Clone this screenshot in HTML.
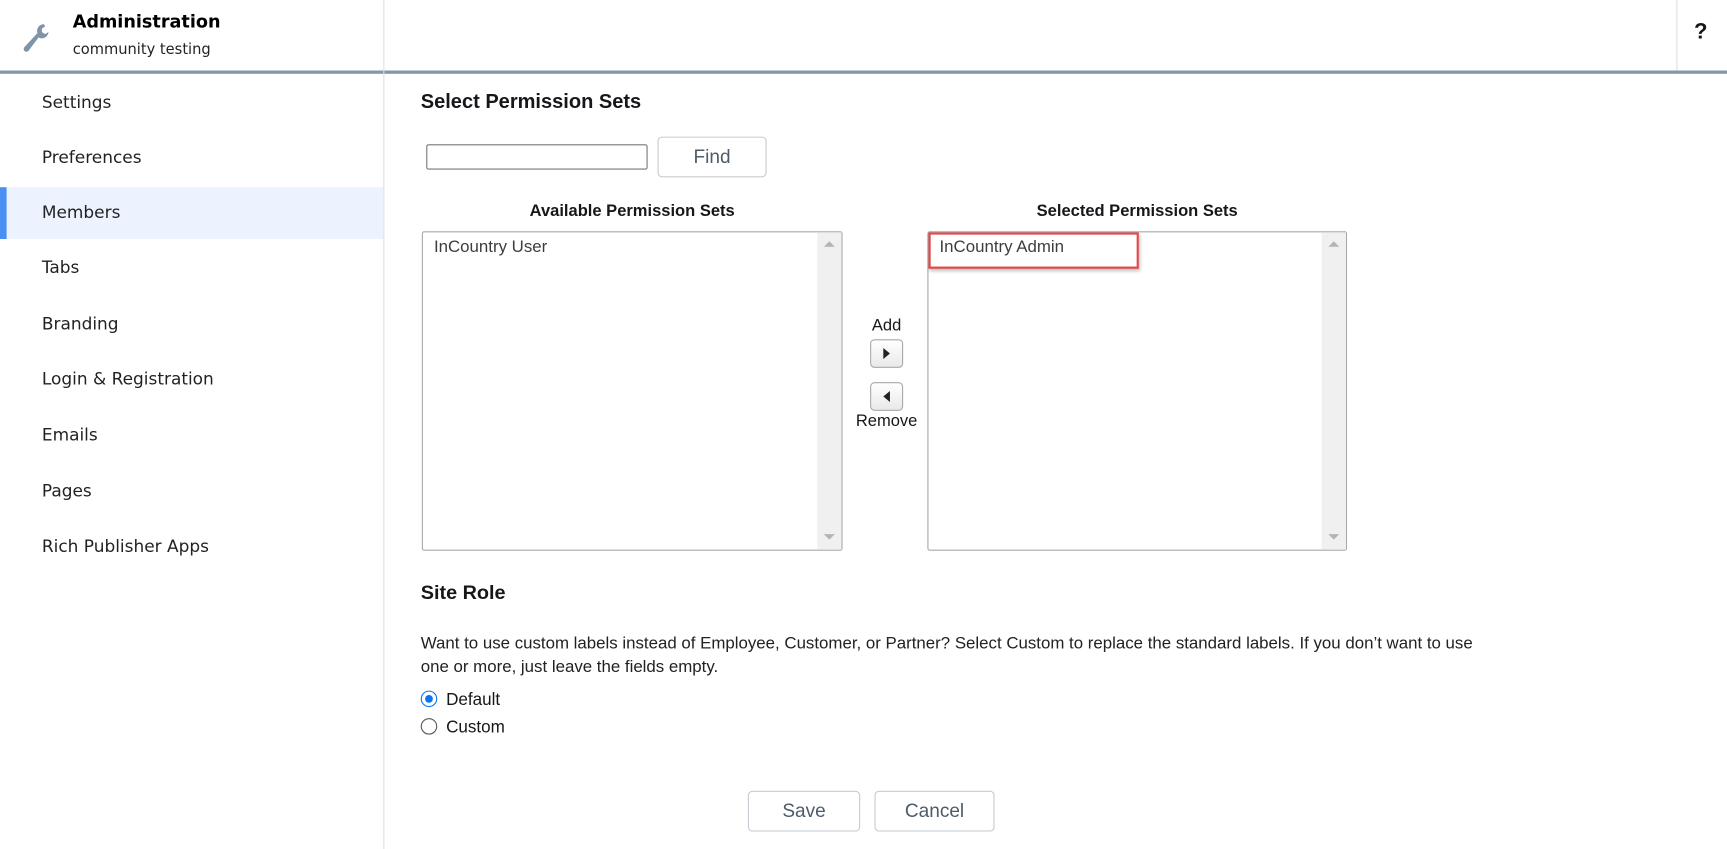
<!DOCTYPE html>
<html><head><meta charset="utf-8"><style>
html,body{margin:0;padding:0;width:1727px;height:849px;overflow:hidden;background:#fff}
#w{position:absolute;left:0;top:0;width:1568px;height:771px;transform:scale(1.1014);transform-origin:0 0;font-family:"Liberation Sans",Arial,sans-serif;color:#16171a}
.a{position:absolute;white-space:nowrap}
.nav{position:absolute;left:38px;color:#1f2124;font-family:"DejaVu Sans","Liberation Sans",sans-serif;font-size:15.4px}
.btn{position:absolute;border:1px solid #c6cbd1;border-radius:4px;background:#fff;color:#4d5b6a;font-size:17.3px;text-align:center;box-sizing:border-box}
.lb{position:absolute;border:1px solid #a8a8a8;border-radius:2px;box-sizing:border-box;background:#fff}
.sb{position:absolute;right:0;top:0;bottom:0;width:22px;background:#f0f0f0}
.up{position:absolute;left:6px;top:8px;width:0;height:0;border-left:5px solid transparent;border-right:5px solid transparent;border-bottom:5px solid #b4b4b4}
.dn{position:absolute;left:6px;bottom:9px;width:0;height:0;border-left:5px solid transparent;border-right:5px solid transparent;border-top:5px solid #b4b4b4}
.it{position:absolute;left:10px;top:5px;font-size:15.3px;color:#3d3d3d}
.ab{position:absolute;left:790px;width:30px;height:26px;border:1px solid #a8a8a8;border-radius:4px;box-sizing:border-box;background:linear-gradient(#fff,#e9e9e9)}
.rd{position:absolute;left:382px;width:15px;height:15px;border-radius:50%;box-sizing:border-box}
</style></head><body><div id="w">
<div class="a" style="left:0;top:64px;width:1568px;height:3px;background:#8497a8"></div>
<div class="a" style="left:348px;top:0;width:1px;height:771px;background:#dcdfe3"></div>
<div class="a" style="left:1522px;top:0;width:1px;height:64px;background:#dcdfe3"></div>
<div class="a" style="left:1538px;top:18px;font-size:20px;font-weight:bold">?</div>
<svg class="a" style="left:18px;top:18px" width="30" height="32" viewBox="0 0 30 32"><path d="M22 4 a6 6 0 0 0 -6 8 L4 25 a2.5 2.5 0 0 0 4 3 L17 16 a6 6 0 0 0 9 -5 l-3 2 l-3 -2 l0 -3 l3 -2 z" fill="#7e94a8"/></svg>
<div class="a" style="left:66px;top:10px;font-size:16px;font-weight:bold;font-family:'DejaVu Sans','Liberation Sans',sans-serif;color:#000">Administration</div>
<div class="a" style="left:66px;top:38px;font-size:13.3px;font-family:'DejaVu Sans','Liberation Sans',sans-serif;color:#1f2124">community testing</div>
<div class="a" style="left:0;top:170px;width:348px;height:47px;background:#ecf3fe"></div>
<div class="a" style="left:0;top:170px;width:6px;height:47px;background:#4a90f0"></div>
<div class="nav" style="top:84px">Settings</div>
<div class="nav" style="top:134px">Preferences</div>
<div class="nav" style="top:184px">Members</div>
<div class="nav" style="top:234px">Tabs</div>
<div class="nav" style="top:285px">Branding</div>
<div class="nav" style="top:335px">Login &amp; Registration</div>
<div class="nav" style="top:386px">Emails</div>
<div class="nav" style="top:437px">Pages</div>
<div class="nav" style="top:487px">Rich Publisher Apps</div>
<div class="a" style="left:382px;top:82px;font-size:18.2px;font-weight:bold">Select Permission Sets</div>
<div class="a" style="left:387px;top:131px;width:201px;height:23px;border:1px solid #777;border-radius:2px;box-sizing:border-box"></div>
<div class="btn" style="left:597px;top:124px;width:99px;height:37px;line-height:35px">Find</div>
<div class="a" style="left:383px;top:183px;width:382px;text-align:center;font-size:15px;font-weight:bold">Available Permission Sets</div>
<div class="a" style="left:842px;top:183px;width:381px;text-align:center;font-size:15px;font-weight:bold">Selected Permission Sets</div>
<div class="lb" style="left:383px;top:210px;width:382px;height:290px"><div class="sb"><div class="up"></div><div class="dn"></div></div><div class="it">InCountry User</div></div>
<div class="lb" style="left:842px;top:210px;width:381px;height:290px"><div class="sb"><div class="up"></div><div class="dn"></div></div><div class="it">InCountry Admin</div></div>
<div class="a" style="left:843px;top:211px;width:191px;height:33px;border:2px solid #e04a4a;box-sizing:border-box;box-shadow:1px 2px 3px rgba(0,0,0,.25)"></div>
<div class="a" style="left:775px;top:287px;width:60px;text-align:center;font-size:15px">Add</div>
<div class="ab" style="top:308px"><div class="a" style="left:11px;top:7px;border-top:5px solid transparent;border-bottom:5px solid transparent;border-left:6px solid #222"></div></div>
<div class="ab" style="top:347px"><div class="a" style="left:11px;top:7px;border-top:5px solid transparent;border-bottom:5px solid transparent;border-right:6px solid #222"></div></div>
<div class="a" style="left:765px;top:374px;width:80px;text-align:center;font-size:15px">Remove</div>
<div class="a" style="left:382px;top:528px;font-size:18px;font-weight:bold">Site Role</div>
<div class="a" style="left:382px;top:574px;font-size:15.3px;line-height:21px;color:#222;white-space:normal;width:970px">Want to use custom labels instead of Employee, Customer, or Partner? Select Custom to replace the standard labels. If you don’t want to use one or more, just leave the fields empty.</div>
<div class="rd" style="top:627px;border:1.5px solid #0a74f0"><div class="a" style="left:2.5px;top:2.5px;width:7px;height:7px;border-radius:50%;background:#0a74f0"></div></div>
<div class="a" style="left:405px;top:627px;font-size:15.5px">Default</div>
<div class="rd" style="top:652px;border:1.5px solid #555"></div>
<div class="a" style="left:405px;top:652px;font-size:15.5px">Custom</div>
<div class="btn" style="left:679px;top:718px;width:102px;height:37px;line-height:35px">Save</div>
<div class="btn" style="left:794px;top:718px;width:109px;height:37px;line-height:35px">Cancel</div>
</div></body></html>
